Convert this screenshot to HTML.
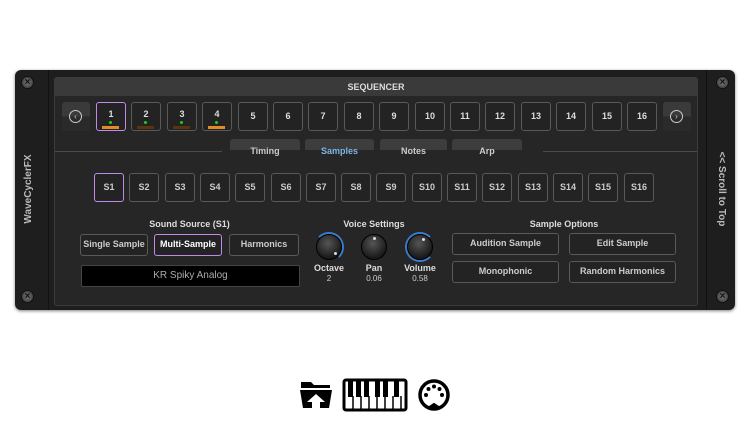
<!DOCTYPE html>
<html><head><style>
*{margin:0;padding:0;box-sizing:border-box}
body{width:750px;height:422px;background:#fff;font-family:"Liberation Sans",sans-serif;position:relative;overflow:hidden}
.abs{position:absolute}
#outer{left:15px;top:70px;width:720px;height:240px;background:#1e1e1e;border-radius:6px;box-shadow:0 1px 3px rgba(0,0,0,.5)}
#inner{left:54px;top:77px;width:644px;height:229px;background:#262626;border:1px solid #3c3c3c;border-radius:3px}
#hdr{left:55px;top:78px;width:642px;height:18px;background:#3a3a3a;color:#ddd;font-size:9px;font-weight:bold;text-align:center;line-height:18px}
.btn{position:absolute;background:#232323;border:1.5px solid #595959;border-radius:3px;color:#ccc;font-size:9px;font-weight:bold;text-align:center}
.sel{border-color:#c28ae8}
.screw{position:absolute;width:13px;height:13px;border-radius:50%;background:radial-gradient(#777,#333);border:1px solid #111;color:#111;font-size:10px;line-height:11px;text-align:center;font-weight:bold}
.tab{position:absolute;top:139px;height:24px;background:linear-gradient(#3d3d3d 0,#3d3d3d 45%,#262626 46%);border-radius:3px;color:#ccc;font-size:9px;font-weight:bold;text-align:center;line-height:24px}
.lbl{position:absolute;color:#ddd;font-size:9px;font-weight:bold;text-align:center}
.knob{position:absolute;width:26px;height:26px;border-radius:50%;background:radial-gradient(circle at 45% 35%,#555,#1a1a1a 70%);border:1px solid #000}
.dot{position:absolute;width:3px;height:3px;background:#ddd;border-radius:50%}
.val{position:absolute;color:#ccc;font-size:8px;text-align:center;width:40px}
</style></head><body>
<div id="outer" class="abs"></div>
<div class="screw" style="left:21px;top:76px">×</div>
<div class="screw" style="left:21px;top:290px">×</div>
<div class="screw" style="left:716px;top:76px">×</div>
<div class="screw" style="left:716px;top:290px">×</div>
<div class="abs" style="left:48px;top:70px;width:1px;height:240px;background:#111"></div>
<div class="abs" style="left:706px;top:70px;width:1px;height:240px;background:#111"></div>
<div class="abs" style="left:-18px;top:183px;width:94px;height:12px;transform:rotate(-90deg);color:#bbb;font-size:10px;font-weight:bold;text-align:center">WaveCyclerFX</div>
<div class="abs" style="left:671px;top:183px;width:100px;height:12px;transform:rotate(90deg);color:#bbb;font-size:10px;font-weight:bold;text-align:center">&lt;&lt; Scroll to Top</div>
<div id="inner" class="abs"></div>
<div id="hdr" class="abs">SEQUENCER</div>
<div class="abs" style="left:62px;top:102px;width:28px;height:29px;background:linear-gradient(#3a3a3a 50%,#2a2a2a 50%);border-radius:3px"><div style="margin:8px 7px;width:13px;height:13px;border:1px solid #ccc;border-radius:50%;color:#ccc;font-size:8px;line-height:11px;text-align:center">‹</div></div>
<div class="abs" style="left:663px;top:102px;width:28px;height:29px;background:linear-gradient(#3a3a3a 50%,#2a2a2a 50%);border-radius:3px"><div style="margin:8px 7px;width:13px;height:13px;border:1px solid #ccc;border-radius:50%;color:#ccc;font-size:8px;line-height:11px;text-align:center">›</div></div>
<div id="steps"></div>
<div class="abs" style="left:55px;top:151px;width:167px;height:1px;background:#4a4a4a"></div>
<div class="abs" style="left:543px;top:151px;width:154px;height:1px;background:#4a4a4a"></div>
<div class="tab" style="left:230px;width:70px">Timing</div>
<div class="tab" style="left:305px;width:69px;color:#7fb6e8">Samples</div>
<div class="tab" style="left:380px;width:67px">Notes</div>
<div class="tab" style="left:452px;width:70px">Arp</div>
<div id="ss"></div>
<div class="lbl" style="left:80px;top:219px;width:219px">Sound Source (S1)</div>
<div class="btn" style="left:80px;top:234px;width:68px;height:22px;line-height:19px">Single Sample</div>
<div class="btn sel" style="left:154px;top:234px;width:68px;height:22px;line-height:19px;color:#fff">Multi-Sample</div>
<div class="btn" style="left:229px;top:234px;width:70px;height:22px;line-height:19px">Harmonics</div>
<div class="abs" style="left:81px;top:265px;width:219px;height:22px;background:#000;border:1px solid #444;border-radius:2px;color:#aaa;font-size:10px;text-align:center;line-height:20px">KR Spiky Analog</div>
<div class="lbl" style="left:320px;top:219px;width:108px">Voice Settings</div>
<div class="abs" style="left:314px;top:232px;width:30px;height:30px;border-radius:50%;border:2px solid #3a7ccc;border-left-color:transparent;border-bottom-color:transparent"></div>
<div class="knob" style="left:316px;top:234px"></div>
<div class="dot" style="left:334px;top:252px"></div>
<div class="knob" style="left:361px;top:234px"></div>
<div class="dot" style="left:373px;top:237px"></div>
<div class="abs" style="left:405px;top:232px;width:30px;height:30px;border-radius:50%;border:2px solid #3a7ccc;border-right-color:transparent"></div>
<div class="knob" style="left:407px;top:234px"></div>
<div class="dot" style="left:422px;top:238px"></div>
<div class="lbl" style="left:309px;top:263px;width:40px">Octave</div>
<div class="lbl" style="left:354px;top:263px;width:40px">Pan</div>
<div class="lbl" style="left:400px;top:263px;width:40px">Volume</div>
<div class="val" style="left:309px;top:274px">2</div>
<div class="val" style="left:354px;top:274px">0.06</div>
<div class="val" style="left:400px;top:274px">0.58</div>
<div class="lbl" style="left:452px;top:219px;width:224px">Sample Options</div>
<div class="btn" style="left:452px;top:233px;width:107px;height:22px;line-height:19px">Audition Sample</div>
<div class="btn" style="left:569px;top:233px;width:107px;height:22px;line-height:19px">Edit Sample</div>
<div class="btn" style="left:452px;top:261px;width:107px;height:22px;line-height:19px">Monophonic</div>
<div class="btn" style="left:569px;top:261px;width:107px;height:22px;line-height:19px">Random Harmonics</div>
<svg class="abs" style="left:298px;top:378px" width="156" height="34" viewBox="0 0 156 34">
<path d="M3 4h10l3 3h16v3H3z" fill="#000"/>
<path d="M2 12h32l-3 18H5z" fill="#000"/>
<path d="M18 16l-9 8h5v6h8v-6h5z" fill="#fff"/>
<rect x="46" y="2" width="62" height="30" rx="2" fill="#fff" stroke="#000" stroke-width="3"/>
<g fill="none" stroke="#000" stroke-width="1.5"><path d="M55 18v14M63 18v14M71 18v14M79 18v14M87 18v14M95 18v14M103 18v14"/></g>
<g fill="#000"><rect x="50" y="3" width="5" height="16"/><rect x="58" y="3" width="5" height="16"/><rect x="66" y="3" width="5" height="16"/><rect x="77" y="3" width="5" height="16"/><rect x="85" y="3" width="5" height="16"/><rect x="96" y="3" width="5" height="16"/></g>
<circle cx="136" cy="17" r="14" fill="none" stroke="#000" stroke-width="3.5"/>
<path d="M130 30l6-4 6 4" fill="#000" stroke="#000" stroke-width="2"/>
<g fill="#000"><circle cx="128" cy="17" r="2"/><circle cx="144" cy="17" r="2"/><circle cx="130.5" cy="11" r="2"/><circle cx="141.5" cy="11" r="2"/><circle cx="136" cy="8.5" r="2"/></g>
</svg>
<script>
var s='';
var top=['#5a1212','#5a1212','#d02020','#5a1212'];var bot=['#e08a2a','#5a3410','#5a3410','#e08a2a'];
for(var i=0;i<16;i++){var x=Math.round(96+i*35.4);
s+='<div class="btn'+(i==0?' sel':'')+'" style="left:'+x+'px;top:102px;width:30px;height:29px;line-height:'+(i<4?'22':'26')+'px;color:#ddd">'+(i+1);
if(i<4){s+='<div style="position:absolute;left:7px;top:2px;width:14px;height:3px;background:'+top[i]+'"></div><div style="position:absolute;left:12px;top:18px;width:3px;height:3px;border-radius:50%;background:#2c2"></div><div style="position:absolute;left:5px;top:23px;width:17px;height:3px;background:'+bot[i]+'"></div>';}
s+='</div>';}
document.getElementById('steps').innerHTML=s;
s='';for(i=0;i<16;i++){x=Math.round(94+i*35.3);
s+='<div class="btn'+(i==0?' sel':'')+'" style="left:'+x+'px;top:173px;width:30px;height:29px;line-height:26px">S'+(i+1)+'</div>';}
document.getElementById('ss').innerHTML=s;
</script>
</body></html>
